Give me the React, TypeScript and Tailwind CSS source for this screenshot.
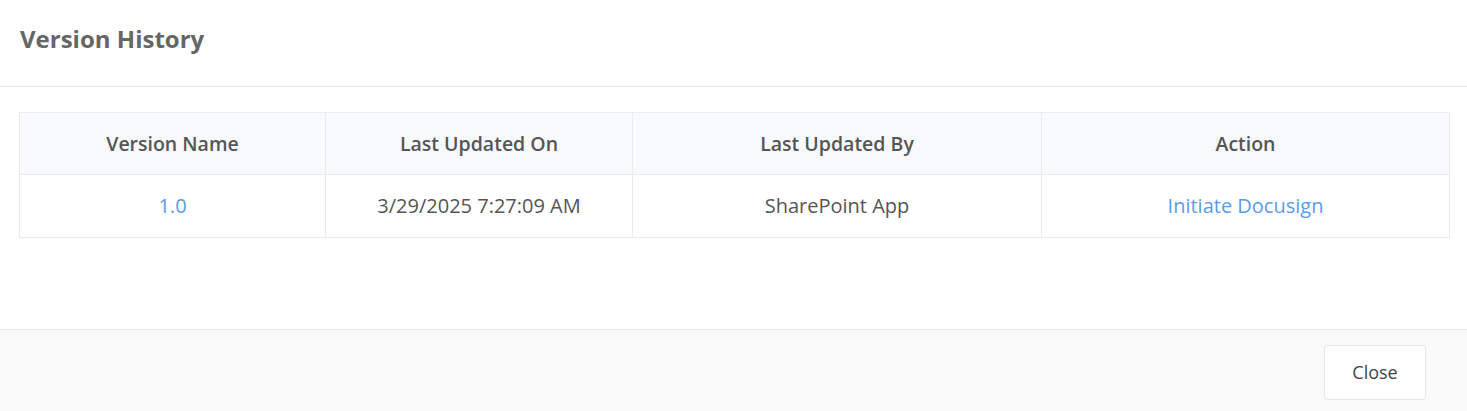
export default function App() {
  const rows = [
    {
      version: "1.0",
      updatedOn: "3/29/2025 7:27:09 AM",
      updatedBy: "SharePoint App",
      action: "Initiate Docusign",
    },
  ];

  return (
    <div className="w-[1467px] h-[411px] bg-white flex flex-col font-['Open_Sans',sans-serif] text-[#555]">
      <div className="h-[87px] border-b border-[#e5e5e5] flex items-center px-5">
        <h2 className="text-[24px] font-bold text-[#666] leading-none -mt-[9px]">Version History</h2>
      </div>

      <div className="flex-1 pl-[19px] pr-[17px] pt-[25px]">
        <div className="border border-[#ebebeb]">
          <div className="grid grid-cols-[306px_307px_409px_1fr] h-[62px] bg-[#f8f9fb] border-b border-[#ebebeb] text-[19.5px] font-semibold text-[#555]">
            <div className="flex items-center justify-center border-r border-[#ebebeb]">Version Name</div>
            <div className="flex items-center justify-center border-r border-[#ebebeb]">Last Updated On</div>
            <div className="flex items-center justify-center border-r border-[#ebebeb]">Last Updated By</div>
            <div className="flex items-center justify-center">Action</div>
          </div>
          {rows.map((r) => (
            <div
              key={r.version}
              className="grid grid-cols-[306px_307px_409px_1fr] h-[62px] text-[20px] text-[#555]"
            >
              <div className="flex items-center justify-center border-r border-[#ebebeb]">
                <a className="text-[#5b9bea] cursor-pointer">{r.version}</a>
              </div>
              <div className="flex items-center justify-center border-r border-[#ebebeb]">{r.updatedOn}</div>
              <div className="flex items-center justify-center border-r border-[#ebebeb]">{r.updatedBy}</div>
              <div className="flex items-center justify-center">
                <a className="text-[#5b9bea] cursor-pointer">{r.action}</a>
              </div>
            </div>
          ))}
        </div>
      </div>

      <div className="h-[82px] bg-[#f9f9f9] border-t border-[#e8e8e8] flex items-center justify-end pr-[41px] pt-[4px]">
        <button className="w-[102px] h-[55px] bg-white border border-[#e6e6e6] rounded-[4px] text-[18px] text-[#444]">
          Close
        </button>
      </div>
    </div>
  );
}
